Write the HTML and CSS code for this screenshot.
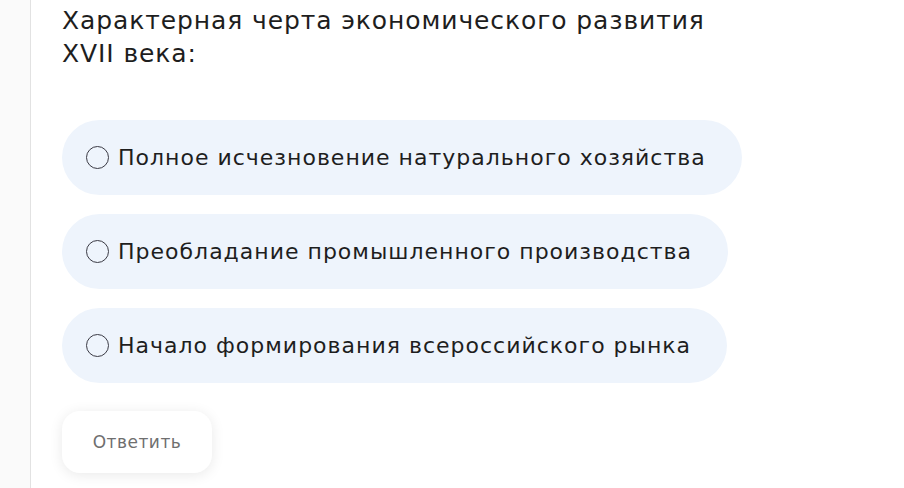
FILE: index.html
```html
<!DOCTYPE html>
<html lang="ru">
<head>
<meta charset="utf-8">
<link rel="stylesheet" href="styles.css">
</head>
<body>
<div class="page">
  <aside class="side"></aside>
  <main class="main">
    <h1 class="question">Характерная черта экономического развития<br>XVII века:</h1>
    <div class="options">
      <label class="option"><span class="radio"></span><span class="opt-text">Полное исчезновение натурального хозяйства</span></label>
      <label class="option"><span class="radio"></span><span class="opt-text">Преобладание промышленного производства</span></label>
      <label class="option"><span class="radio"></span><span class="opt-text">Начало формирования всероссийского рынка</span></label>
    </div>
    <button class="answer">Ответить</button>
  </main>
</div>
</body>
</html>
```
FILE: styles.css
```css
html, body {
  margin: 0;
  padding: 0;
  background: #ffffff;
  font-family: "DejaVu Sans", "Noto Sans", sans-serif;
}
.page {
  display: flex;
  height: 488px;
  overflow: hidden;
}
.side {
  width: 30px;
  flex: none;
  background: #fafafa;
  border-right: 1px solid #e2e2e2;
}
.main {
  padding: 4px 0 0 31px;
  display: flex;
  flex-direction: column;
  align-items: flex-start;
}
.question {
  margin: 0;
  font-weight: 400;
  font-size: 25px;
  line-height: 33px;
  letter-spacing: 0.9px;
  color: #1e1e1e;
}
.options {
  margin-top: 50px;
  display: flex;
  flex-direction: column;
  align-items: flex-start;
  gap: 19px;
}
.option {
  display: flex;
  align-items: center;
  height: 75px;
  box-sizing: border-box;
  padding: 0 36px 0 24px;
  border-radius: 38px;
  background: #eef4fc;
}
.radio {
  width: 21px;
  height: 21px;
  border: 1.5px solid #3a3a44;
  border-radius: 50%;
  flex: none;
  margin-right: 9px;
}
.opt-text {
  font-size: 22px;
  letter-spacing: 1px;
  color: #1e1e1e;
}
.answer {
  margin-top: 28px;
  width: 150px;
  height: 62px;
  border: none;
  border-radius: 18px;
  background: #ffffff;
  box-shadow: 0 2px 14px rgba(0,0,0,0.09);
  font-family: inherit;
  font-size: 17px;
  letter-spacing: 0.5px;
  color: #6f6f6f;
}
```
